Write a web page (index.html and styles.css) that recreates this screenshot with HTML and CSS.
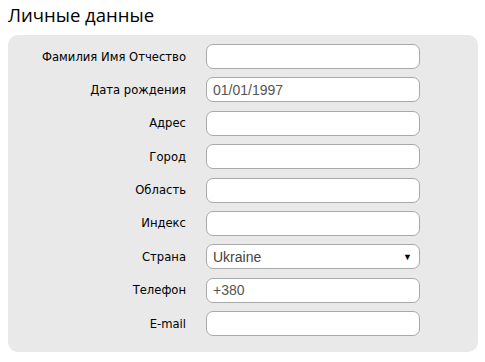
FILE: index.html
```html
<!DOCTYPE html>
<html lang="ru">
<head>
  <meta charset="UTF-8" />
  <title>Личные данные</title>
  <link rel="stylesheet" href="styles.css">
</head>
<body>
  <h2 class="title">Личные данные</h2>

  <form class="panel">
    <div class="row">
      <label>Фамилия Имя Отчество</label>
      <input type="text" class="field">
    </div>
    <div class="row">
      <label>Дата рождения</label>
      <input type="text" class="field" value="01/01/1997">
    </div>
    <div class="row">
      <label>Адрес</label>
      <input type="text" class="field">
    </div>
    <div class="row">
      <label>Город</label>
      <input type="text" class="field">
    </div>
    <div class="row">
      <label>Область</label>
      <input type="text" class="field">
    </div>
    <div class="row">
      <label>Индекс</label>
      <input type="text" class="field">
    </div>
    <div class="row">
      <label>Страна</label>
      <div class="field select">
        <span>Ukraine</span>
        <span class="arrow">▼</span>
      </div>
    </div>
    <div class="row">
      <label>Телефон</label>
      <input type="text" class="field" value="+380">
    </div>
    <div class="row">
      <label>E-mail</label>
      <input type="text" class="field">
    </div>
  </form>
</body>
</html>
```

FILE: styles.css
```css
* {
  margin: 0;
  padding: 0;
  box-sizing: border-box;
}

body {
  font-family: 'DejaVu Sans', sans-serif;
  background: #fff;
  color: #000;
  padding: 0 7px 0 8px;
}

.title {
  font-family: 'Open Sans', sans-serif;
  font-weight: normal;
  font-size: 18.5px;
  line-height: 28px;
  height: 35px;
  padding-top: 1px;
}

.panel {
  background: #e9e9e9;
  border-radius: 10px;
  padding: 9px 0 16px;
  display: flex;
  flex-direction: column;
  gap: 8.4px;
}

.row {
  display: flex;
  align-items: center;
  gap: 20px;
}

.row label {
  width: 178px;
  text-align: right;
  font-size: 11.6px;
}

.field {
  width: 214px;
  height: 25px;
  border: 1px solid #a9a9a9;
  border-radius: 7px;
  background: #fff;
  font-family: 'Liberation Sans', sans-serif;
  font-size: 14px;
  color: #555;
  padding: 0 6px;
  outline: none;
}

.select {
  display: flex;
  align-items: center;
  justify-content: space-between;
  color: #444;
}

.select .arrow {
  font-size: 9px;
  color: #000;
  margin-right: 1px;
}
```
